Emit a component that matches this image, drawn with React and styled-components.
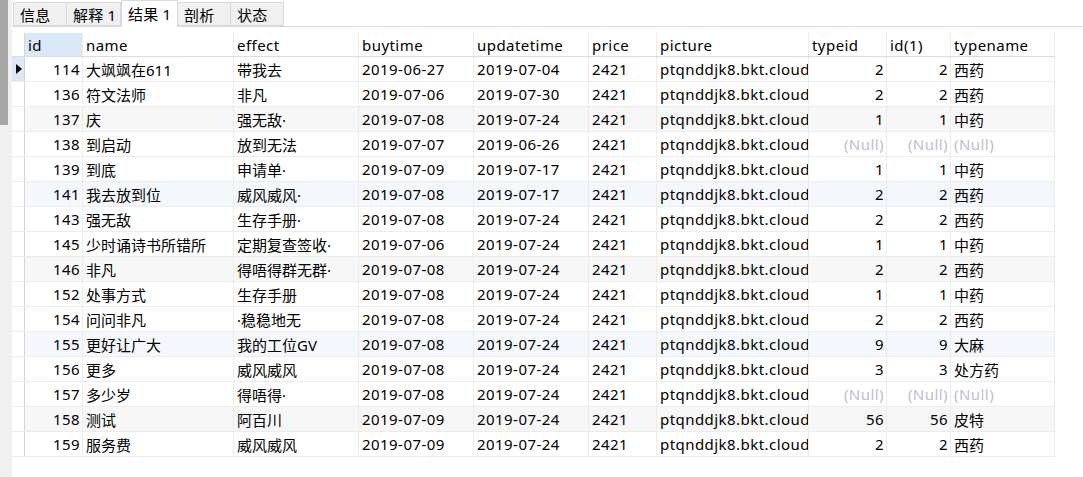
import React from "react";
import styled, { createGlobalStyle } from "styled-components";

const Global = createGlobalStyle`
  html, body { margin: 0; padding: 0; background: #fff; }
  body { font-family: "Noto Sans", "Noto Sans CJK SC", sans-serif; color: #000; }
`;

const COLS = "13px 58px 151px 125px 115px 115px 68px 152px 78px 64px 104px";

const Page = styled.div`
  display: flex;
  width: 1083px;
  height: 477px;
  overflow: hidden;
`;

const Gutter = styled.div`
  width: 12px;
  flex: none;
  background: #f0f0f0;
`;

const Thumb = styled.div`
  width: 8px;
  height: 125px;
  background: #a6a6a6;
`;

const Main = styled.div`
  flex: 1;
  display: flex;
  flex-direction: column;
`;

const TabBar = styled.div`
  display: flex;
  align-items: flex-end;
  height: 26px;
  padding-left: 1px;
  border-bottom: 1px solid #dadada;
`;

const Tab = styled.div`
  box-sizing: border-box;
  width: ${(p) => p.$w}px;
  height: ${(p) => (p.$active ? 27 : 24)}px;
  margin-bottom: ${(p) => (p.$active ? -1 : 0)}px;
  display: flex;
  align-items: center;
  padding-left: 6px;
  font-size: 15px;
  letter-spacing: 0.2px;
  background: ${(p) => (p.$active ? "#fff" : "#f0f0f0")};
  border: 1px solid #d9d9d9;
  border-bottom: ${(p) => (p.$active ? "none" : "1px solid #d9d9d9")};
  border-left: ${(p) => (p.$first || p.$active ? "1px solid #d9d9d9" : "none")};
  ${(p) => (p.$active ? "padding-bottom:2px;" : "")}
`;

const Grid = styled.div`
  margin-top: 6px;
  width: 1043px;
`;

const Row = styled.div`
  display: grid;
  grid-template-columns: ${COLS};
  height: ${(p) => (p.$head ? 24 : 25)}px;
  box-sizing: border-box;
  border-bottom: 1px solid ${(p) => (p.$head ? "#dcdcdc" : "#ececec")};
  background: ${(p) => p.$bg || "#fff"};
`;

const Cell = styled.div`
  box-sizing: border-box;
  display: flex;
  align-items: center;
  justify-content: ${(p) => (p.$right ? "flex-end" : "flex-start")};
  padding: 0 ${(p) => (p.$right ? 2 : 0)}px 0 ${(p) => (p.$right ? 0 : 3)}px;
  font-size: 15px;
  letter-spacing: ${(p) => (p.$cjk ? 0 : 0.45)}px;
  white-space: nowrap;
  overflow: hidden;
  border-right: 1px solid #ececec;
  color: ${(p) => (p.$null ? "#b9c0cf" : "#000")};
  background: ${(p) => p.$bg || "transparent"};
`;

const Marker = styled.div`
  box-sizing: border-box;
  border-right: 1px solid #d4d4d4;
  display: flex;
  align-items: center;
  padding-left: 4px;
  background: ${(p) => (p.$sel ? "#dbe9f6" : "#fff")};
`;

const Arrow = styled.span`
  width: 0;
  height: 0;
  border-top: 5px solid transparent;
  border-bottom: 5px solid transparent;
  border-left: 6px solid #000;
`;

const headers = ["id", "name", "effect", "buytime", "updatetime", "price", "picture", "typeid", "id(1)", "typename"];

const N = null;
const data = [
  [114, "大飒飒在611", "带我去", "2019-06-27", "2019-07-04", 2, 2, "西药"],
  [136, "符文法师", "非凡", "2019-07-06", "2019-07-30", 2, 2, "西药"],
  [137, "庆", "强无敌·", "2019-07-08", "2019-07-24", 1, 1, "中药"],
  [138, "到启动", "放到无法", "2019-07-07", "2019-06-26", N, N, N],
  [139, "到底", "申请单·", "2019-07-09", "2019-07-17", 1, 1, "中药"],
  [141, "我去放到位", "威风威风·", "2019-07-08", "2019-07-17", 2, 2, "西药"],
  [143, "强无敌", "生存手册·", "2019-07-08", "2019-07-24", 2, 2, "西药"],
  [145, "少时诵诗书所错所", "定期复查签收·", "2019-07-06", "2019-07-24", 1, 1, "中药"],
  [146, "非凡", "得唔得群无群·", "2019-07-08", "2019-07-24", 2, 2, "西药"],
  [152, "处事方式", "生存手册", "2019-07-08", "2019-07-24", 1, 1, "中药"],
  [154, "问问非凡", "·稳稳地无", "2019-07-08", "2019-07-24", 2, 2, "西药"],
  [155, "更好让广大", "我的工位GV", "2019-07-08", "2019-07-24", 9, 9, "大麻"],
  [156, "更多", "威风威风", "2019-07-08", "2019-07-24", 3, 3, "处方药"],
  [157, "多少岁", "得唔得·", "2019-07-08", "2019-07-24", N, N, N],
  [158, "测试", "阿百川", "2019-07-09", "2019-07-24", 56, 56, "皮特"],
  [159, "服务费", "威风威风", "2019-07-09", "2019-07-24", 2, 2, "西药"],
];

const rowBg = (i) => {
  if (i % 3 !== 2) return "#fff";
  return (i / 3) % 2 < 1 ? "#f7f7f7" : "#f4f8fc";
};

const Val = ({ v, right, cjk }) =>
  v === null ? (
    <Cell $right={right} $null>(Null)</Cell>
  ) : (
    <Cell $right={right} $cjk={cjk}>{v}</Cell>
  );

export default function App() {
  const tabs = [
    { t: "信息", w: 54 },
    { t: "解释 1", w: 54 },
    { t: "结果 1", w: 57, active: true },
    { t: "剖析", w: 53 },
    { t: "状态", w: 53 },
  ];
  return (
    <Page>
      <Global />
      <Gutter>
        <Thumb />
      </Gutter>
      <Main>
        <TabBar>
          {tabs.map((t, i) => (
            <Tab key={t.t} $w={t.w} $active={t.active} $first={i === 0}>
              {t.t}
            </Tab>
          ))}
        </TabBar>
        <Grid>
          <Row $head>
            <Marker />
            {headers.map((h, i) => (
              <Cell key={h} $bg={i === 0 ? "#d9e9f7" : undefined}>
                {h}
              </Cell>
            ))}
          </Row>
          {data.map((r, i) => (
            <Row key={r[0]} $bg={rowBg(i)}>
              <Marker $sel={i === 0}>{i === 0 && <Arrow />}</Marker>
              <Cell $right>{r[0]}</Cell>
              <Cell $cjk>{r[1]}</Cell>
              <Cell $cjk>{r[2]}</Cell>
              <Cell>{r[3]}</Cell>
              <Cell>{r[4]}</Cell>
              <Cell>2421</Cell>
              <Cell>ptqnddjk8.bkt.cloud</Cell>
              <Val v={r[5]} right />
              <Val v={r[6]} right />
              <Val v={r[7]} cjk />
            </Row>
          ))}
        </Grid>
      </Main>
    </Page>
  );
}
